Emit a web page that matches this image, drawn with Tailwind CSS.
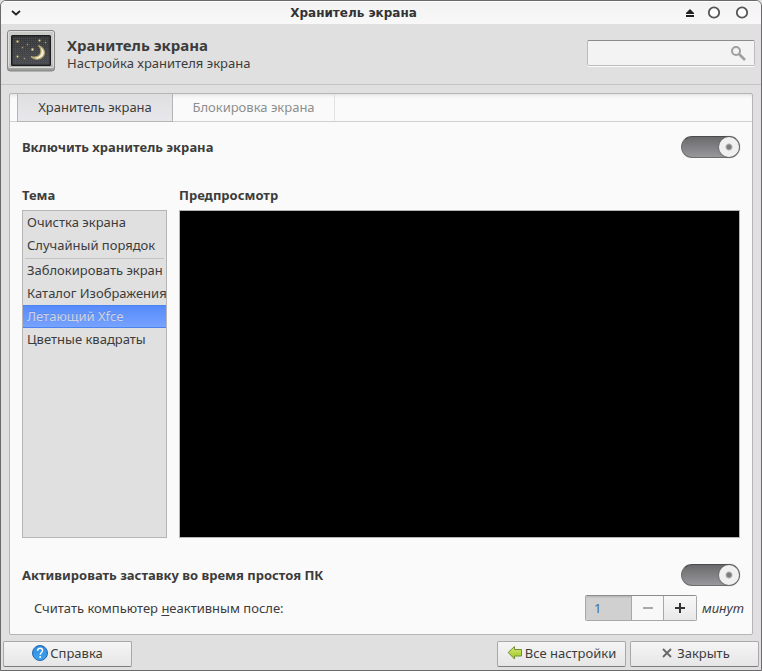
<!DOCTYPE html>
<html lang="ru" class="h-full">
<head>
<meta charset="utf-8">
<meta name="viewport" content="width=device-width, initial-scale=1">
<title>Хранитель экрана</title>
<script src="https://cdn.jsdelivr.net/npm/@tailwindcss/browser@4"></script>
</head>
<body class="flex min-h-full flex-col overflow-hidden rounded-t-md border border-[#6b696b] bg-[#e0e0e0] font-['Noto_Sans',sans-serif] text-[13px] leading-5 text-[#3c3c3c]">

<!-- Title bar -->
<div class="flex h-[23px] shrink-0 items-center border-t border-white bg-linear-to-b from-[#f3f3f4] to-[#f8f8f9] pr-[11px] pl-2">
  <button type="button" aria-label="Меню окна" class="flex size-4 items-center justify-center">
    <svg class="size-4" viewBox="0 0 16 16" fill="none" stroke="#222" stroke-width="1.8"><path d="M3 6l4 3.500L11 6"/></svg>
  </button>
  <div class="flex-1 text-center font-['DejaVu_Sans',sans-serif] text-[12px] font-bold text-[#333]">Хранитель экрана</div>
  <div class="flex items-center justify-end gap-3">
    <button type="button" aria-label="Свернуть в заголовок" class="-mr-1 flex size-4 items-center justify-center"><svg class="h-4 w-3" viewBox="0 0 12 16" fill="#222"><path d="M2 9V8l4-4 4 4v1zM2 10h8v2H2z"/></svg></button>
    <button type="button" aria-label="Развернуть"><svg class="size-4" viewBox="0 0 16 16" fill="#fff" stroke="#555" stroke-width="1.8"><circle cx="8" cy="7.500" r="5.200"/></svg></button>
    <button type="button" aria-label="Закрыть окно"><svg class="size-4" viewBox="0 0 16 16" fill="#fff" stroke="#555" stroke-width="1.8"><circle cx="8" cy="7.500" r="5.200"/></svg></button>
  </div>
</div>

<!-- Header -->
<header class="flex h-[61px] shrink-0 items-start border-b border-[#c4c4c4] px-1.5">
  <svg class="mt-[6px] h-[42px] w-12 shrink-0" viewBox="0 0 48 42" aria-hidden="true">
    <defs>
      <linearGradient id="frame" x2="0" y2="1"><stop stop-color="#c9cbc7"/><stop offset=".8" stop-color="#c6c7c5"/><stop offset="1" stop-color="#959694"/></linearGradient>
      <linearGradient id="glass" x2="0" y2="1"><stop stop-color="#37383b"/><stop offset="1" stop-color="#4a4c51"/></linearGradient>
      <pattern id="mesh" width="2" height="2" patternUnits="userSpaceOnUse"><rect width="1" height="1" fill="#62646a" opacity=".45"/></pattern>
    </defs>
    <rect x=".5" y=".5" width="47" height="40.500" rx="2.500" fill="url(#frame)" stroke="#858684"/>
    <rect x="1.500" y="1.500" width="45" height="36" rx="1.500" fill="none" stroke="#dcdedb"/>
    <rect x="4" y="5" width="40" height="31" rx="1.500" fill="#1e1e20"/>
    <rect x="5.500" y="6.500" width="37" height="28" fill="url(#glass)"/>
    <rect x="5.500" y="6.500" width="37" height="28" fill="url(#mesh)"/>
    <path d="M31.500 15.500c6 2 7.500 8 4 11.500-3.300 3.200-8.500 3-11.500-.5 5 2 10-.6 10-5.500 0-2.200-.8-4-2.500-5.500z" fill="#f5f1dc" stroke="#b3a66e" stroke-width="1.200"/>
    <g fill="#77714f"><circle cx="10.500" cy="11.500" r="1.700"/><circle cx="32.500" cy="10.500" r="1.500"/><circle cx="10.500" cy="26.500" r="1.500"/><circle cx="25.500" cy="19.500" r="1.700"/><circle cx="20.500" cy="14.500" r="1"/><circle cx="15.500" cy="17.500" r="1"/><circle cx="17.500" cy="28.500" r="1"/><circle cx="38.500" cy="12.500" r="1"/></g>
    <g fill="#e0dcc0"><circle cx="10.500" cy="11.500" r=".8"/><circle cx="32.500" cy="10.500" r=".7"/><circle cx="10.500" cy="26.500" r=".7"/><circle cx="25.500" cy="19.500" r="1"/><circle cx="20.500" cy="14.500" r=".4"/><circle cx="15.500" cy="17.500" r=".4"/><circle cx="17.500" cy="28.500" r=".4"/><circle cx="38.500" cy="12.500" r=".4"/></g>
  </svg>
  <div class="mt-[11px] ml-3">
    <h1 class="text-[15px] leading-5 font-bold">Хранитель экрана</h1>
    <p class="leading-4">Настройка хранителя экрана</p>
  </div>
  <label class="mt-4 ml-auto flex h-[26px] w-[168px] items-center rounded-xs border border-[#bcbcbc] border-t-[#8c8c8c] bg-[#f3f3f3] pr-2 shadow-[0_1px_0_#fafafa]">
    <input type="search" aria-label="Поиск" class="h-full min-w-0 flex-1 bg-transparent px-2 outline-none">
    <svg class="size-4" viewBox="0 0 16 16" fill="none" stroke="#a0a0a0" aria-hidden="true"><circle cx="6" cy="6" r="4" stroke-width="2"/><path d="M9 9l6 6" stroke-width="2.600"/></svg>
  </label>
</header>

<!-- Notebook -->
<main class="mx-2 mt-2 flex flex-1 flex-col rounded-xs border border-[#b5b5b5] bg-[#fafafa]">
  <div role="tablist" class="flex h-7 shrink-0 border-b border-[#d0d0d0] pl-[7px] shadow-[inset_0_4px_4px_-3px_#0000001f]">
    <button type="button" role="tab" aria-selected="true" class="-mb-px w-[156px] border-x border-b border-[#b5b5b5] bg-linear-to-b from-[#dfdfe1] to-[#e8e8ec] pb-0.5">Хранитель экрана</button>
    <button type="button" role="tab" aria-selected="false" class="w-[162px] border-r border-[#e2e2e2] pb-0.5 text-[#8e8e8e]">Блокировка экрана</button>
  </div>

  <div class="flex flex-1 flex-col px-3 pt-[14px] pb-[13px]">
    <div class="flex h-[22px] items-center justify-between">
      <label for="enable" class="font-bold">Включить хранитель экрана</label>
      <input id="enable" type="checkbox" role="switch" checked class="flex h-[22px] w-[59px] appearance-none items-center rounded-full border border-[#6e6e70] border-t-[#4a4a4c] bg-linear-to-b from-[#6a6a6c] to-[#98989c] before:size-5 before:rounded-full before:bg-[radial-gradient(circle,#7c7c7c_2px,#f0f0f0_4px)] before:shadow-[0_0_1px_1px_#66666699] checked:justify-end">
    </div>

    <div class="mt-[27px] grid flex-1 grid-cols-[145px_1fr] grid-rows-[20px_1fr] gap-x-3 gap-y-[5px]">
      <h2 id="theme" class="font-bold">Тема</h2>
      <h2 class="font-bold">Предпросмотр</h2>
      <div role="listbox" aria-labelledby="theme" class="flex flex-col border border-[#b5b5b5] bg-[#e0e0e0]">
        <button type="button" role="option" class="h-[23px] px-1 pb-0.5 text-left whitespace-nowrap">Очистка экрана</button>
        <button type="button" role="option" class="h-[23px] px-1 pb-0.5 text-left whitespace-nowrap">Случайный порядок</button>
        <hr class="mx-0.5 mt-px border-[#c4c4c4]">
        <button type="button" role="option" class="h-[23px] px-1 pb-0.5 text-left whitespace-nowrap">Заблокировать экран</button>
        <button type="button" role="option" class="h-[23px] px-1 pb-0.5 text-left whitespace-nowrap">Каталог Изображения</button>
        <button type="button" role="option" aria-selected="true" class="h-[23px] border-y border-[#4c84ee] bg-linear-to-b from-[#568bfb] to-[#77a2ff] px-1 pb-0.5 text-left leading-5 whitespace-nowrap text-[#cfd3dc] text-shadow-[0_-1px_0_#4474d066]">Летающий Xfce</button>
        <button type="button" role="option" class="h-[23px] px-1 pb-0.5 text-left whitespace-nowrap">Цветные квадраты</button>
      </div>
      <div class="border border-[#b5b5b5] bg-black"></div>
    </div>

    <div class="mt-[26px] flex h-[22px] items-center justify-between">
      <label for="idle" class="font-bold">Активировать заставку во время простоя ПК</label>
      <input id="idle" type="checkbox" role="switch" checked class="flex h-[22px] w-[59px] appearance-none items-center rounded-full border border-[#6e6e70] border-t-[#4a4a4c] bg-linear-to-b from-[#6a6a6c] to-[#98989c] before:size-5 before:rounded-full before:bg-[radial-gradient(circle,#7c7c7c_2px,#f0f0f0_4px)] before:shadow-[0_0_1px_1px_#66666699] checked:justify-end">
    </div>
    <div class="mt-[9px] flex h-[26px] items-center pl-3">
      <label for="minutes">Считать компьютер <u class="underline-offset-2">н</u>еактивным после:</label>
      <div class="ml-auto flex h-[26px] w-28 overflow-hidden rounded-xs border border-[#a8a8a8] border-t-[#8c8c8c]">
        <input id="minutes" type="text" inputmode="numeric" value="1" class="w-[45px] bg-[#d0d0d0] pl-2 text-[#3f6a95] shadow-[inset_0_2px_2px_-1px_#00000026] outline-none">
        <button type="button" aria-label="Меньше" class="flex w-8 items-center justify-center border-l border-[#a8a8a8] bg-[#f8f8f8]"><svg class="h-3 w-3" viewBox="0 0 12 12"><path d="M1 5h10v2H1z" fill="#a8a8a8"/></svg></button>
        <button type="button" aria-label="Больше" class="flex flex-1 items-center justify-center border-l border-[#a8a8a8] bg-linear-to-b from-[#f8f8f8] to-[#e8e8e9]"><svg class="h-3 w-3" viewBox="0 0 12 12"><path d="M1 5h4V1h2v4h4v2H7v4H5V7H1z" fill="#333"/></svg></button>
      </div>
      <span class="w-[43px] pl-[5px] italic">минут</span>
    </div>
  </div>
</main>

<!-- Actions -->
<footer class="flex shrink-0 gap-1 px-0.5 pt-1.5 pb-[3px]">
  <button type="button" class="mr-auto flex h-[26px] w-[129px] items-center justify-center gap-0.5 rounded-xs border border-[#a8a8a8] border-b-[#7c7c7c] bg-linear-to-b from-[#f5f5f5] to-[#e6e6e6] pb-0.5">
    <svg class="size-4" viewBox="0 0 16 16" aria-hidden="true"><defs><linearGradient id="help" x2="0" y2="1"><stop stop-color="#2f8be0"/><stop offset="1" stop-color="#3ea4f0"/></linearGradient></defs><circle cx="8" cy="8" r="7.500" fill="url(#help)" stroke="#2368ad"/><path d="M5.500 5.800c.2-1.700 1.200-2.500 2.600-2.500 1.500 0 2.500.9 2.500 2.200 0 1.800-2.400 2.100-2.400 4.200" fill="none" stroke="#fff" stroke-width="1.400"/><circle cx="8.200" cy="12" r=".95" fill="#fff"/></svg>
    Справка
  </button>
  <button type="button" class="flex h-[26px] w-[129px] items-center justify-center gap-0.5 rounded-xs border border-[#a8a8a8] border-b-[#7c7c7c] bg-linear-to-b from-[#f5f5f5] to-[#e6e6e6] pb-0.5 whitespace-nowrap">
    <svg class="size-4" viewBox="0 0 16 16" aria-hidden="true"><defs><linearGradient id="back" x2="0" y2="1"><stop stop-color="#d6ea72"/><stop offset="1" stop-color="#9cc525"/></linearGradient></defs><path d="M1.200 7.500 7.500 1.500v3h7v6.500h-7v3z" fill="url(#back)" stroke="#71902c" stroke-linejoin="round"/></svg>
    Все настройки
  </button>
  <button type="button" class="flex h-[26px] w-[129px] items-center justify-center gap-0.5 rounded-xs border border-[#a8a8a8] border-b-[#7c7c7c] bg-linear-to-b from-[#f5f5f5] to-[#e6e6e6] pb-0.5">
    <svg class="size-4" viewBox="0 0 16 16" fill="none" stroke="#666" stroke-width="1.8" aria-hidden="true"><path d="m4 4 8 8M12 4l-8 8"/></svg>
    Закрыть
  </button>
</footer>
</body>
</html>
